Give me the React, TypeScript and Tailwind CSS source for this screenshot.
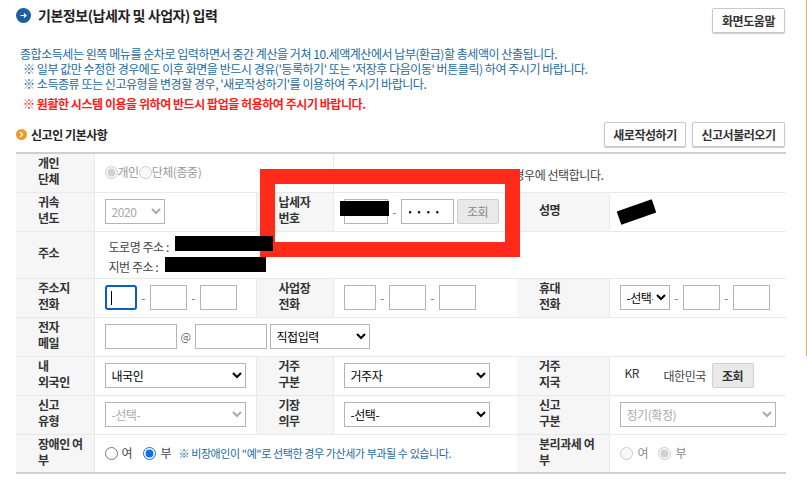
import React from "react";

const Th = ({ children, colSpan }: { children: React.ReactNode; colSpan?: number }) => (
  <th colSpan={colSpan} className="bg-[#f6f6f6] border border-[#e9e9e9] border-l-0 pb-[3px] pl-[22px] pr-1 text-left align-middle text-[12px] leading-[16px] font-bold text-[#333]">
    {children}
  </th>
);
const Td = ({ children, colSpan, className = "" }: { children?: React.ReactNode; colSpan?: number; className?: string }) => (
  <td colSpan={colSpan} className={`border border-[#e9e9e9] border-x-0 pl-[10px] align-middle text-[12px] text-[#444] ${className}`}>
    <div className="flex items-center">{children}</div>
  </td>
);
const Input = ({ w, ...rest }: { w: string } & React.InputHTMLAttributes<HTMLInputElement>) => (
  <input {...rest} className={`h-[25px] ${w} border border-[#b4b4b4] bg-white px-1 text-black outline-none`} />
);
const Dash = () => <span className="w-[13px] text-center text-[12px] text-[#777]">-</span>;
const Sel = ({ w, value, disabled }: { w: string; value: string; disabled?: boolean }) => (
  <select
    disabled={disabled}
    defaultValue={value}
    className={`h-[25px] ${w} border border-[#b4b4b4] bg-white pl-[2px] text-[12px] ${disabled ? "text-[#aaa]" : "text-black"}`}
  >
    <option>{value}</option>
  </select>
);
const Btn = ({ children, w }: { children: React.ReactNode; w: string }) => (
  <button className={`h-[25px] ${w} rounded-[2px] border border-[#c8c8c8] bg-white text-[12px] font-bold text-[#333] shadow-[0_1px_1px_rgba(0,0,0,0.2)]`}>
    {children}
  </button>
);
const Radio = ({ checked, disabled, name }: { checked?: boolean; disabled?: boolean; name: string }) => (
  <input type="radio" name={name} defaultChecked={checked} disabled={disabled} className="m-0 h-[13px] w-[13px] accent-[#0b6fe8]" />
);

export default function App() {
  return (
    <div className="relative flex h-[493px] w-[807px] overflow-hidden bg-white font-['Noto_Sans_CJK_KR','Noto_Sans',sans-serif] tracking-[-0.45px]">
      <div className="w-[806px] pl-4 pr-[21px]">
        <div className="flex justify-between pt-2">
          <div className="flex h-[15px] items-center gap-[7px]">
            <svg width="15" height="15" viewBox="0 0 15 15">
              <circle cx="7.5" cy="7.5" r="7.5" fill="#1f5f9e" />
              <path d="M4.5 7.5h5.5M8 5.5l2 2-2 2" stroke="#fff" strokeWidth="1.2" fill="none" />
            </svg>
            <span className="text-[14px] font-bold text-[#222]">기본정보(납세자 및 사업자) 입력</span>
          </div>
          <Btn w="w-[73px]">화면도움말</Btn>
        </div>

        <div className="mt-[13px] pl-1 text-[12px] leading-[15px] text-[#1d6a9c]">
          <p>종합소득세는 왼쪽 메뉴를 순차로 입력하면서 중간 계산을 거쳐 10.세액계산에서 납부(환급)할 총세액이 산출됩니다.</p>
          <p className="pl-[3px]">※ 일부 값만 수정한 경우에도 이후 화면을 반드시 경유('등록하기' 또는 '저장후 다음이동' 버튼클릭) 하여 주시기 바랍니다.</p>
          <p className="pl-[3px]">※ 소득종류 또는 신고유형을 변경할 경우, '새로작성하기'를 이용하여 주시기 바랍니다.</p>
          <p className="mt-[5px] pl-[3px] font-bold text-[#ff1a1a]">※ 원활한 시스템 이용을 위하여 반드시 팝업을 허용하여 주시기 바랍니다.</p>
        </div>

        <div className="mt-[11px] flex items-center justify-between">
          <div className="flex items-center gap-1">
            <svg width="11" height="11" viewBox="0 0 11 11">
              <circle cx="5.5" cy="5.5" r="5.5" fill="#ef9a1e" />
              <path d="M4 3l2.5 2.5L4 8" stroke="#fff" strokeWidth="1.4" fill="none" />
            </svg>
            <span className="text-[12px] font-bold text-[#222]">신고인 기본사항</span>
          </div>
          <div className="flex gap-[6px]">
            <Btn w="w-[82px]">새로작성하기</Btn>
            <Btn w="w-[93px]">신고서불러오기</Btn>
          </div>
        </div>

        <table className="mt-[5px] w-[770px] table-fixed border-collapse border-y-2 border-y-[#cfcfcf]">
          <colgroup>
            <col className="w-[78px]" />
            <col className="w-[162px]" />
            <col className="w-[77px]" />
            <col className="w-[184px]" />
            <col className="w-[92px]" />
            <col className="w-[177px]" />
          </colgroup>
          <tbody>
            <tr className="h-[39px]">
              <Th>개인<br />단체</Th>
              <Td colSpan={2} className="border-r border-r-[#e9e9e9] pb-[1px]">
                <label className="flex items-center text-[12px] text-[#999]">
                  <Radio name="a" checked disabled />개인
                  <Radio name="a" disabled />단체(종중)
                </label>
              </Td>
              <Td colSpan={3} className="pt-[5px]">
                <span className="ml-[170px] whitespace-nowrap">경우에 선택합니다.</span>
              </Td>
            </tr>
            <tr className="h-[39px]">
              <Th>귀속<br />년도</Th>
              <Td className="border-r border-r-[#e9e9e9]"><Sel w="w-[60px]" value="2020" disabled /></Td>
              <Th>납세자<br />번호</Th>
              <Td>
                <Input w="w-[44px]" />
                <Dash />
                <Input w="w-[53px] pl-[7px] text-[9px] tracking-[6px]" type="password" defaultValue="••••" />
                <button className="ml-[3px] h-[25px] w-[42px] rounded-[2px] border border-[#d0d0d0] bg-[#e9e9e9] text-[12px] text-[#888]">조회</button>
              </Td>
              <Th>성명</Th>
              <Td />
            </tr>
            <tr className="h-[47px]">
              <Th>주소</Th>
              <td colSpan={5} className="border border-x-0 border-[#e9e9e9] pl-[14px] pt-[5px] text-[12px] leading-[20px] text-[#444]">
                <p>도로명 주소 :</p>
                <p>지번 주소 :</p>
              </td>
            </tr>
            <tr className="h-[39px]">
              <Th>주소지<br />전화</Th>
              <Td className="border-r border-r-[#e9e9e9]">
                <div className="flex h-[25px] w-[32px] items-center rounded-[3px] border-2 border-[#0a5cc4] pl-1">
                  <span className="h-[14px] w-px bg-black" />
                </div>
                <Dash />
                <Input w="w-[37px]" />
                <Dash />
                <Input w="w-[37px]" />
              </Td>
              <Th>사업장<br />전화</Th>
              <Td>
                <Input w="w-[32px]" />
                <Dash />
                <Input w="w-[37px]" />
                <Dash />
                <Input w="w-[37px]" />
              </Td>
              <Th>휴대<br />전화</Th>
              <Td>
                <Sel w="w-[50px]" value="-선택-" />
                <Dash />
                <Input w="w-[37px]" />
                <Dash />
                <Input w="w-[37px]" />
              </Td>
            </tr>
            <tr className="h-[39px]">
              <Th>전자<br />메일</Th>
              <Td colSpan={5}>
                <Input w="w-[72px]" />
                <span className="w-[18px] text-center text-[11px] text-[#666]">@</span>
                <Input w="w-[72px]" />
                <span className="w-[3px]" />
                <Sel w="w-[100px]" value="직접입력" />
              </Td>
            </tr>
            <tr className="h-[39px]">
              <Th>내<br />외국인</Th>
              <Td className="border-r border-r-[#e9e9e9]"><Sel w="w-[141px]" value="내국인" /></Td>
              <Th>거주<br />구분</Th>
              <Td><Sel w="w-[146px]" value="거주자" /></Td>
              <Th>거주<br />지국</Th>
              <Td>
                <span className="mb-[5px] ml-[5px] w-[39px] text-[12px] text-[#333]">KR</span>
                <span className="w-[48px] text-[12px] text-[#444]">대한민국</span>
                <button className="h-[25px] w-[42px] rounded-[2px] border border-[#d0d0d0] bg-[#e9e9e9] text-[12px] font-bold text-[#333]">조회</button>
              </Td>
            </tr>
            <tr className="h-[39px]">
              <Th>신고<br />유형</Th>
              <Td className="border-r border-r-[#e9e9e9]"><Sel w="w-[141px]" value="-선택-" disabled /></Td>
              <Th>기장<br />의무</Th>
              <Td><Sel w="w-[146px]" value="-선택-" /></Td>
              <Th>신고<br />구분</Th>
              <Td><Sel w="w-[156px]" value="정기(확정)" disabled /></Td>
            </tr>
            <tr className="h-[39px]">
              <Th>장애인 여<br />부</Th>
              <Td colSpan={3}>
                <Radio name="b" />
                <span className="ml-1 w-[21px]">여</span>
                <Radio name="b" checked />
                <span className="ml-[5px] w-[18px]">부</span>
                <span className="whitespace-nowrap text-[11px] tracking-[-0.4px] text-[#1d6a9c]">※ 비장애인이 "예"로 선택한 경우 가산세가 부과될 수 있습니다.</span>
              </Td>
              <Th>분리과세 여<br />부</Th>
              <Td>
                <Radio name="c" disabled />
                <span className="ml-[5px] w-[20px] text-[#888]">여</span>
                <Radio name="c" checked disabled />
                <span className="ml-[5px] text-[#888]">부</span>
              </Td>
            </tr>
          </tbody>
        </table>
      </div>
      <div className="h-[356px] w-px bg-[#dcb25c]" />

      <div className="absolute left-[260px] top-[169px] h-[88px] w-[260px] border-[15px] border-[#ff2a1a]" />
      <div className="absolute left-[175px] top-[236px] h-[15px] w-[98px] bg-black" />
      <div className="absolute left-[165px] top-[257px] h-[15px] w-[101px] bg-black" />
      <div className="absolute left-[340px] top-[201px] h-[15px] w-[49px] bg-black" />
      <div className="absolute left-[618px] top-[205px] h-[14px] w-[37px] rotate-[-19deg] bg-black" />
    </div>
  );
}
